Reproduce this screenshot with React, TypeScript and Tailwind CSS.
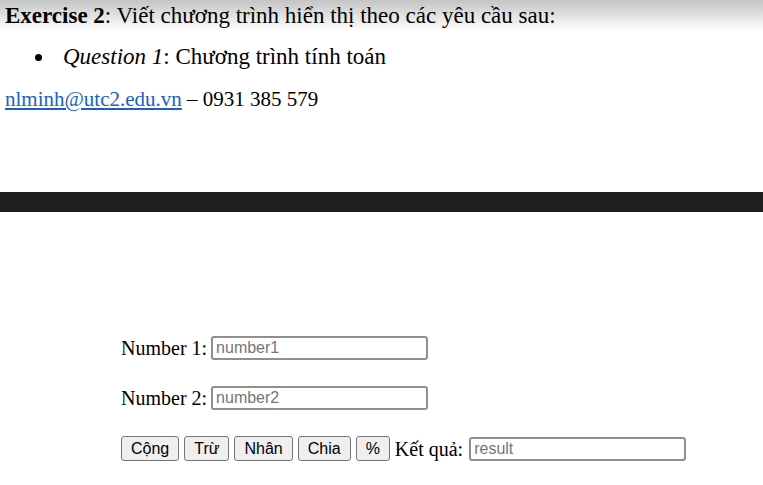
export default function App() {
  return (
    <div className="min-h-[485px] bg-white text-black font-['Liberation_Serif',serif] text-[20px]">
      {/* Heading with top shade */}
      <div className="h-[34px] bg-gradient-to-b from-[#c4c4c4] to-white to-[90%] pl-[5px] pt-[3px] text-[23px] leading-[26px]">
        <span className="font-bold">Exercise 2</span>: Viết chương trình hiển thị theo các yêu cầu sau:
      </div>

      <ul className="mt-[10px] list-none text-[23px] leading-[26px]">
        <li className="flex items-center">
          <span className="ml-[35px] mr-[21px] w-[7px] h-[7px] rounded-full bg-black" />
          <span>
            <em>Question 1</em>: Chương trình tính toán
          </span>
        </li>
      </ul>

      <p className="mt-[16px] pl-[5px] text-[21px] leading-[26px]">
        <a href="#" className="text-[#1a5fc8] underline">
          nlminh@utc2.edu.vn
        </a>{" "}
        – 0931 385 579
      </p>

      <div className="mt-[80px] h-[20px] bg-[#1f1f1f]" />

      <form className="mt-[124px] pl-[121px] flex flex-col gap-[26px]">
        <div className="flex items-center gap-[4px] h-[24px]">
          <label>Number 1:</label>
          <Field placeholder="number1" />
        </div>
        <div className="flex items-center gap-[4px] h-[24px]">
          <label>Number 2:</label>
          <Field placeholder="number2" />
        </div>
        <div className="flex items-center h-[25px]">
          {["Cộng", "Trừ", "Nhân", "Chia", "%"].map((b) => (
            <button
              key={b}
              type="button"
              className="mr-[5px] h-[25px] px-[9px] border border-[#767676] rounded-[3px] bg-[#efefef] font-['Liberation_Sans',sans-serif] text-[16px] leading-none"
            >
              {b}
            </button>
          ))}
          <label className="mr-[6px]">Kết quả:</label>
          <Field placeholder="result" />
        </div>
      </form>
    </div>
  );
}

function Field({ placeholder }: { placeholder: string }) {
  return (
    <input
      type="text"
      placeholder={placeholder}
      className="w-[217px] h-[24px] border-2 border-[#8f8f8f] rounded-[3px] px-[3px] font-['Liberation_Sans',sans-serif] text-[16px] placeholder:text-[#757575] outline-none"
    />
  );
}
